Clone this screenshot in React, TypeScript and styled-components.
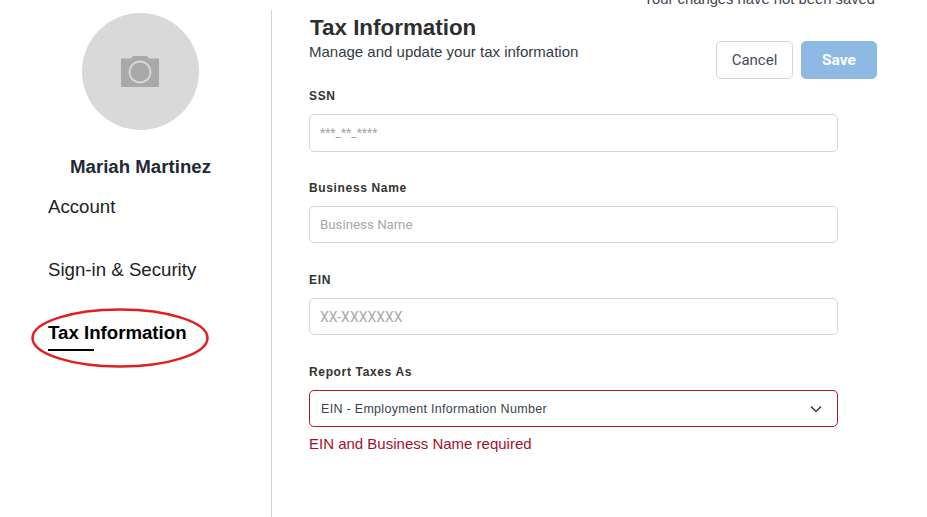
import styled, { createGlobalStyle } from "styled-components";

const Global = createGlobalStyle`
  html, body {
    margin: 0;
    padding: 0;
    background: #ffffff;
    overflow: hidden;
  }
  body {
    font-family: "Liberation Sans", Arial, sans-serif;
  }
  * { box-sizing: border-box; }
`;

const Page = styled.div`
  display: flex;
  width: 927px;
  height: 517px;
  overflow: hidden;
`;

const Sidebar = styled.aside`
  position: relative;
  width: 272px;
  height: 507px;
  margin-top: 10px;
  border-right: 1px solid #d4d4d4;
  padding-top: 3px;
  flex-shrink: 0;
`;

const Avatar = styled.div`
  width: 117px;
  height: 117px;
  margin-left: 82px;
  padding-right: 1px;
  border-radius: 50%;
  background: #d9d9d9;
  display: flex;
  align-items: center;
  justify-content: center;
`;

const Name = styled.div`
  margin-top: 25px;
  text-align: center;
  font-size: 14pt;
  line-height: 24px;
  font-weight: 700;
  color: #1f2a37;
  padding-left: 10px;
`;

const Nav = styled.nav`
  margin-top: 16px;
  padding-left: 48px;
  display: flex;
  flex-direction: column;
  gap: 39px;
`;

const NavItem = styled.div<{ $active?: boolean }>`
  position: relative;
  font-size: 14pt;
  line-height: 24px;
  font-weight: ${p => (p.$active ? 700 : 400)};
  color: ${p => (p.$active ? "#000000" : "#222222")};
  ${p =>
    p.$active &&
    `&::after {
      content: "";
      position: absolute;
      left: 0;
      top: 28px;
      width: 46px;
      height: 2px;
      background: #000000;
    }`}
`;

const Circled = styled.svg`
  position: absolute;
  left: 30px;
  top: 297px;
`;

const Main = styled.main`
  position: relative;
  flex: 1;
  padding-left: 37px;
`;

const Form = styled.div`
  width: 529px;
`;

const Title = styled.h1`
  margin: 14px 0 0;
  padding-left: 1px;
  font-size: 22.4px;
  line-height: 28px;
  font-weight: 700;
  color: #2e2e2e;
`;

const Subtitle = styled.p`
  margin: 0;
  font-size: 15px;
  line-height: 20px;
  color: #333b44;
`;

const Fields = styled.div`
  margin-top: 25px;
  display: flex;
  flex-direction: column;
  gap: 27px;
`;

const Field = styled.div`
  display: flex;
  flex-direction: column;
  gap: 9px;
  min-height: 65px;
`;

const Label = styled.label`
  font-size: 12px;
  line-height: 18px;
  font-weight: 700;
  letter-spacing: 0.65px;
  color: #333333;
`;

const Input = styled.div<{ $size: number; $tall?: boolean }>`
  height: ${p => (p.$tall ? "38px" : "37px")};
  border: 1px solid #d6d6d6;
  border-radius: 5px;
  padding: 0 10px;
  display: flex;
  align-items: center;
  font-family: Roboto, sans-serif;
  font-size: ${p => p.$size}px;
  color: #a8a8a8;
`;

const Select = styled.div`
  height: 37px;
  border: 1px solid #a81c2c;
  border-radius: 5px;
  padding: 0 15px 0 11px;
  display: flex;
  align-items: center;
  justify-content: space-between;
  font-size: 12.5px;
  letter-spacing: 0.3px;
  color: #3a4450;
`;

const ErrorText = styled.div`
  margin-top: 7px;
  font-size: 15px;
  line-height: 18px;
  color: #a3102d;
`;

const Actions = styled.div`
  position: absolute;
  top: -11px;
  right: 50px;
  display: flex;
  flex-direction: column;
  align-items: flex-end;
`;

const Unsaved = styled.div`
  padding-right: 2px;
  font-size: 14.8px;
  line-height: 20px;
  color: #3d4752;
  white-space: nowrap;
`;

const Buttons = styled.div`
  margin-top: 32px;
  display: flex;
  gap: 8px;
`;

const Button = styled.button<{ $primary?: boolean }>`
  width: ${p => (p.$primary ? "76px" : "77px")};
  height: 38px;
  border-radius: 5px;
  border: 1px solid ${p => (p.$primary ? "#8fb9e5" : "#d6d6d6")};
  background: ${p => (p.$primary ? "#8fb9e5" : "#ffffff")};
  color: ${p => (p.$primary ? "#ffffff" : "#444e59")};
  font-family: Roboto, sans-serif;
  font-size: ${p => (p.$primary ? "15.500px" : "15px")};
  font-weight: ${p => (p.$primary ? 700 : 400)};
  padding: 0;
`;

function CameraIcon() {
  return (
    <svg width="38" height="31" viewBox="0 0 38 31">
      <path
        d="M1 2.500h9.500l1-1.700Q12 0 13 0h12q1 0 1.500.8l1 1.700H37q1 0 1 1V30q0 1-1 1H1q-1 0-1-1V3.500q0-1 1-1z"
        fill="#a9a9ab"
      />
      <circle cx="19" cy="16" r="10.500" fill="none" stroke="#d9d9d9" strokeWidth="1.800" />
    </svg>
  );
}

export default function App() {
  return (
    <Page>
      <Global />
      <Sidebar>
        <Avatar>
          <CameraIcon />
        </Avatar>
        <Name>Mariah Martinez</Name>
        <Nav>
          <NavItem>Account</NavItem>
          <NavItem>Sign-in &amp; Security</NavItem>
          <NavItem $active>Tax Information</NavItem>
        </Nav>
        <Circled width="180" height="62" viewBox="0 0 180 62">
          <ellipse cx="90" cy="31" rx="87.500" ry="28.500" fill="none" stroke="#e02020" strokeWidth="2.500" />
        </Circled>
      </Sidebar>
      <Main>
        <Form>
          <Title>Tax Information</Title>
          <Subtitle>Manage and update your tax information</Subtitle>
          <Fields>
            <Field>
              <Label>SSN</Label>
              <Input $size={12} $tall>***_**_****</Input>
            </Field>
            <Field>
              <Label>Business Name</Label>
              <Input $size={13.3}>Business Name</Input>
            </Field>
            <Field>
              <Label>EIN</Label>
              <Input $size={14}>XX-XXXXXXX</Input>
            </Field>
            <Field>
              <Label>Report Taxes As</Label>
              <Select>
                EIN - Employment Information Number
                <svg width="12" height="8" viewBox="0 0 12 8">
                  <path d="M1 1.500l5 5 5-5" fill="none" stroke="#2f3a46" strokeWidth="1.500" />
                </svg>
              </Select>
            </Field>
          </Fields>
          <ErrorText>EIN and Business Name required</ErrorText>
        </Form>
        <Actions>
          <Unsaved>Your changes have not been saved</Unsaved>
          <Buttons>
            <Button>Cancel</Button>
            <Button $primary>Save</Button>
          </Buttons>
        </Actions>
      </Main>
    </Page>
  );
}
